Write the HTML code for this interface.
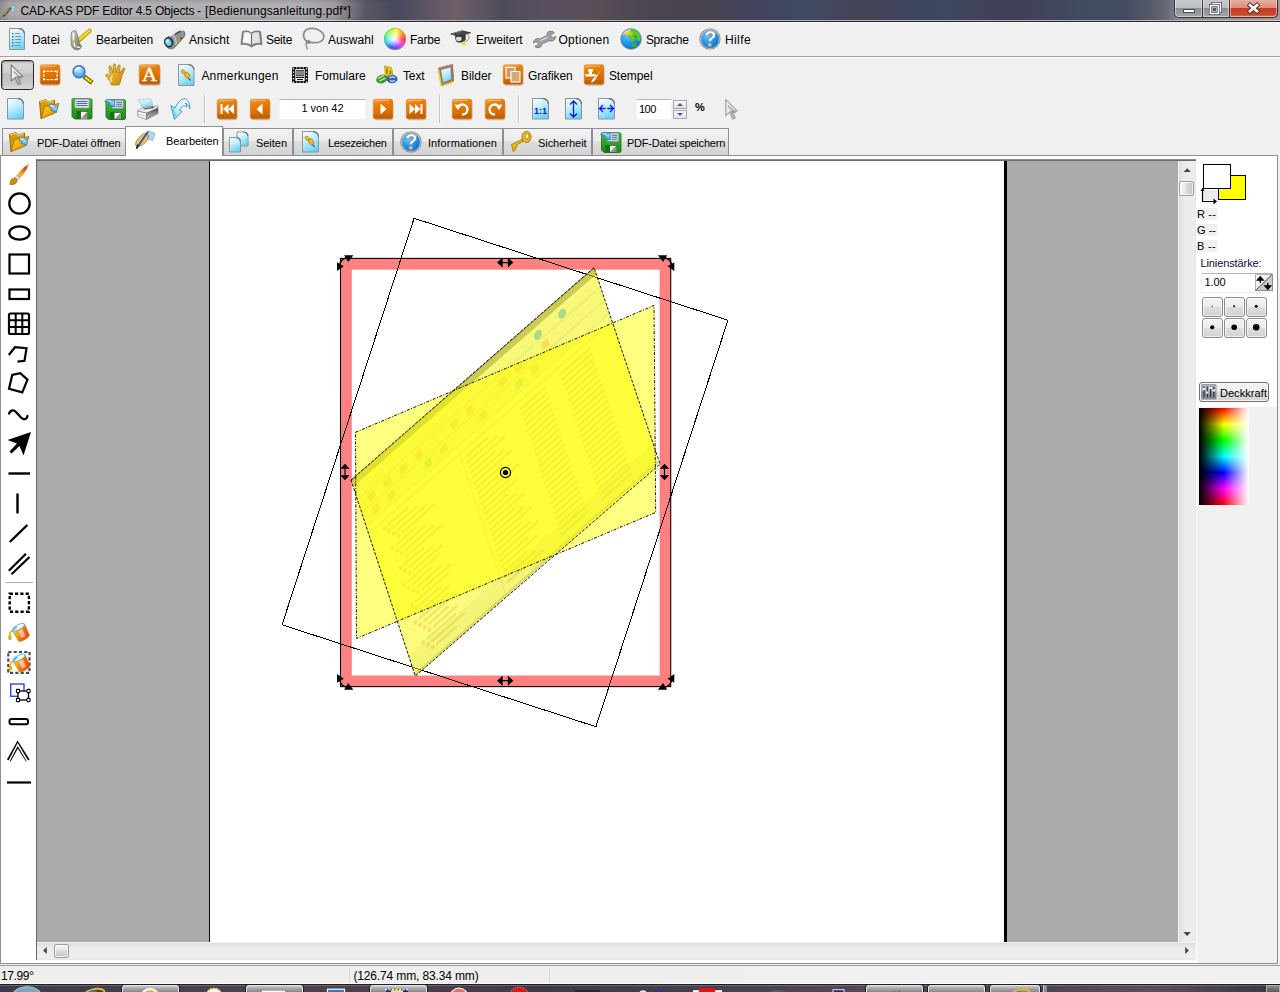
<!DOCTYPE html>
<html lang="de"><head><meta charset="utf-8"><title>CAD-KAS PDF Editor 4.5 Objects - [Bedienungsanleitung.pdf*]</title>
<style>
html,body{margin:0;padding:0;}
body{width:1280px;height:992px;overflow:hidden;background:#f0f0f0;position:relative;font-family:"Liberation Sans", sans-serif;font-size:12px;}
#app{position:absolute;left:0;top:0;width:1280px;height:992px;overflow:hidden;}
#app div{position:absolute;box-sizing:border-box;}
#app svg{position:absolute;left:0;top:0;}
.t{white-space:nowrap;}
</style></head><body><div id="app">
<div style="left:0px;top:0px;width:1280px;height:21px;background:linear-gradient(to right,#4c4858 0,#4b4a5c 380px,#4a4a5e 400px,#5c5463 425px,#6e5f69 455px,#5c5462 482px,#4c4a5c 503px,#595061 540px,#5a4e58 590px,#4c4650 640px,#49424c 700px,#43435a 740px,#404560 770px,#414a63 810px,#444455 860px,#3e455e 910px,#3f4660 950px,#3f4053 1010px,#414b62 1085px,#454c61 1125px,#545a69 1150px,#696d79 1168px,#868890 1178px,#9a9a9e 1280px);"></div>
<div style="left:0px;top:0px;width:400px;height:20px;background:linear-gradient(to right,rgba(150,147,150,.9) 0,rgba(172,169,172,1) 10px,rgba(178,175,179,1) 40px,rgba(178,175,179,1) 300px,rgba(168,164,170,.9) 335px,rgba(150,146,154,.62) 350px,rgba(120,116,126,.3) 366px,rgba(100,96,108,0) 392px);"></div>
<div style="left:0px;top:0px;width:400px;height:20px;background:linear-gradient(to bottom,rgba(60,56,64,.16) 0,rgba(60,56,64,0) 4px,rgba(60,56,64,0) 15px,rgba(60,56,64,.14) 20px);"></div>
<div style="left:0px;top:20px;width:1280px;height:1px;background:linear-gradient(to right,#d4d4d8 0,#cfcfd4 330px,#b2b0ba 380px,#b0aeb8 1100px,#d0d0d4 1280px);"></div>
<div style="left:0px;top:21px;width:1280px;height:1px;background:#28282c;"></div>
<div style="left:0px;top:22px;width:1280px;height:1px;background:#fcfcfc;"></div>
<div style="left:0px;top:56px;width:1280px;height:1px;background:#a0a0a0;"></div>
<div style="left:0px;top:57px;width:1280px;height:1px;background:#fff;"></div>
<div style="left:0px;top:155px;width:1278px;height:809px;background:#fff;border:1px solid #8e8f94;border-bottom-color:#8e8f94;"></div>
<div style="left:36px;top:159px;width:1142px;height:783px;background:#ababab;border-left:1px solid #696969;border-top:2px solid #6c6c6c;"></div>
<div style="left:37px;top:159px;width:1159px;height:1px;background:#8e8e8e;"></div>
<div style="left:210px;top:161px;width:794px;height:781px;background:#fff;"></div>
<div style="left:209px;top:161px;width:1px;height:781px;background:#0a0a0a;"></div>
<div style="left:1004px;top:161px;width:3px;height:781px;background:#000;"></div>
<div style="left:37px;top:942px;width:1159px;height:18px;background:linear-gradient(to bottom,#f6f6f6 0,#f6f6f6 1px,#dedede 1.500px,#e6e6e6 4px,#ececec 7px,#ededed 16px,#e4e4e4 18px);"></div>
<div style="left:36px;top:942px;width:1px;height:18px;background:#696969;"></div>
<div style="left:54px;top:943.5px;width:15px;height:14.5px;background:linear-gradient(to bottom,#f6f6f6 0,#e8e8e8 40%,#d4d4d4 60%,#c8c8c8 100%);border:1px solid #9c9c9c;border-radius:2px;box-shadow:inset 0 0 0 1px rgba(255,255,255,.7);"></div>
<div style="left:1178px;top:161px;width:18px;height:781px;background:linear-gradient(to right,#f6f6f6 0,#f6f6f6 1px,#dedede 1.500px,#e6e6e6 4px,#ececec 7px,#ededed 16px,#e4e4e4 18px);"></div>
<div style="left:1179.2px;top:181px;width:14.5px;height:14.8px;background:linear-gradient(to right,#f6f6f6 0,#e8e8e8 40%,#d4d4d4 60%,#c8c8c8 100%);border:1px solid #9c9c9c;border-radius:2px;box-shadow:inset 0 0 0 1px rgba(255,255,255,.7);"></div>
<div style="left:1178px;top:159px;width:18px;height:1px;background:#8e8e8e;"></div>
<div style="left:1178px;top:160px;width:18px;height:1px;background:#6c6c6c;"></div>
<div style="left:0px;top:965px;width:1280px;height:1px;background:#9a9ca0;"></div>
<div style="left:0px;top:966px;width:1280px;height:17px;background:#f0eded;"></div>
<div style="left:640px;top:966px;width:640px;height:17px;background:linear-gradient(to right,#f0eded,#f0f0f0 120px);"></div>
<div style="left:349px;top:967px;width:1px;height:16px;background:#dcd8d8;"></div>
<div style="left:549px;top:967px;width:1px;height:16px;background:#dcd8d8;"></div>
<div style="left:0px;top:983px;width:1280px;height:1px;background:#fdfdfd;"></div>
<div style="left:0px;top:984px;width:1280px;height:8px;background:linear-gradient(to right,#3c3a4a 0,#4a4052 15%,#4e3f4c 30%,#3d3a48 42%,#45404c 55%,#55475a 68%,#4a4152 80%,#5a4e5c 90%,#3a3640 100%);"></div>
<div style="left:0px;top:984px;width:1280px;height:1px;background:#1c1c20;"></div>
<div style="left:0px;top:985px;width:1280px;height:1px;background:rgba(255,255,255,.22);"></div>
<div style="left:122px;top:985px;width:57px;height:8px;background:linear-gradient(to bottom,#c9c9cb 0,#a4a4a8 40%,#7e7e84 100%);border:1px solid #e4e4e6;border-bottom:none;border-radius:3px 3px 0 0;box-shadow:0 0 0 1px #1c1c20;"></div>
<div style="left:246px;top:985px;width:57px;height:8px;background:linear-gradient(to bottom,#c9c9cb 0,#a4a4a8 40%,#7e7e84 100%);border:1px solid #e4e4e6;border-bottom:none;border-radius:3px 3px 0 0;box-shadow:0 0 0 1px #1c1c20;"></div>
<div style="left:370px;top:985px;width:57px;height:8px;background:linear-gradient(to bottom,#c9c9cb 0,#a4a4a8 40%,#7e7e84 100%);border:1px solid #e4e4e6;border-bottom:none;border-radius:3px 3px 0 0;box-shadow:0 0 0 1px #1c1c20;"></div>
<div style="left:866px;top:985px;width:57px;height:8px;background:linear-gradient(to bottom,#c9c9cb 0,#a4a4a8 40%,#7e7e84 100%);border:1px solid #e4e4e6;border-bottom:none;border-radius:3px 3px 0 0;box-shadow:0 0 0 1px #1c1c20;"></div>
<div style="left:928px;top:985px;width:57px;height:8px;background:linear-gradient(to bottom,#c9c9cb 0,#a4a4a8 40%,#7e7e84 100%);border:1px solid #e4e4e6;border-bottom:none;border-radius:3px 3px 0 0;box-shadow:0 0 0 1px #1c1c20;"></div>
<div style="left:990px;top:985px;width:50px;height:8px;background:linear-gradient(to bottom,#c9c9cb 0,#a4a4a8 40%,#7e7e84 100%);border:1px solid #e4e4e6;border-bottom:none;border-radius:3px 3px 0 0;box-shadow:0 0 0 1px #1c1c20;"></div>
<div style="left:1266px;top:985px;width:14px;height:7px;background:linear-gradient(to bottom,#8a8a8e,#5a5a60);border:1px solid #b0b0b4;border-bottom:none;"></div>
<div style="left:1043px;top:985px;width:4px;height:7px;background:#8e8e94;border-left:1px solid #c8c8cc;"></div>
<div style="left:384px;top:28px;width:22px;height:22px;border-radius:50%;background:conic-gradient(from 90deg,#ff4040,#ff40e0,#8040ff,#3060ff,#30d0ff,#40ff80,#a0ff30,#ffff30,#ffa030,#ff4040);"></div>
<div style="left:1px;top:60px;width:33px;height:30px;border:1.500px solid #262626;border-radius:3.500px;background:linear-gradient(to bottom,#bdbdbd 0,#d6d6d6 12%,#cdcdcd 42%,#bfbfbf 47%,#c6c6c6 75%,#d6d6d6 100%);box-shadow:inset 1px 1px 1px rgba(0,0,0,.25);"></div>
<div style="left:278.5px;top:98.5px;width:87px;height:21.5px;background:#fff;border:1px solid #f0f2f5;border-top-color:#b4b6bc;"></div>
<div style="left:635.5px;top:98.5px;width:36px;height:21.5px;background:#fff;border:1px solid #f0f2f5;border-top-color:#b4b6bc;"></div>
<div style="left:673px;top:100px;width:14px;height:9px;background:linear-gradient(#f6f6f6,#e4e4e4);border:1px solid #a8a8a8;"></div>
<div style="left:673px;top:110px;width:14px;height:9px;background:linear-gradient(#f6f6f6,#e4e4e4);border:1px solid #a8a8a8;"></div>
<div style="left:2px;top:128px;width:125px;height:28px;background:linear-gradient(to bottom,#f2f2f2 0,#ebebeb 45%,#dddddd 50%,#d3d3d3 100%);border:1px solid #8c8e96;"></div>
<div style="left:223px;top:128px;width:70px;height:28px;background:linear-gradient(to bottom,#f2f2f2 0,#ebebeb 45%,#dddddd 50%,#d3d3d3 100%);border:1px solid #8c8e96;"></div>
<div style="left:293px;top:128px;width:100px;height:28px;background:linear-gradient(to bottom,#f2f2f2 0,#ebebeb 45%,#dddddd 50%,#d3d3d3 100%);border:1px solid #8c8e96;"></div>
<div style="left:393px;top:128px;width:110px;height:28px;background:linear-gradient(to bottom,#f2f2f2 0,#ebebeb 45%,#dddddd 50%,#d3d3d3 100%);border:1px solid #8c8e96;"></div>
<div style="left:503px;top:128px;width:89px;height:28px;background:linear-gradient(to bottom,#f2f2f2 0,#ebebeb 45%,#dddddd 50%,#d3d3d3 100%);border:1px solid #8c8e96;"></div>
<div style="left:592px;top:128px;width:137px;height:28px;background:linear-gradient(to bottom,#f2f2f2 0,#ebebeb 45%,#dddddd 50%,#d3d3d3 100%);border:1px solid #8c8e96;"></div>
<div style="left:125px;top:126px;width:98px;height:30px;background:#fff;border:1px solid #8c8e96;border-bottom:none;"></div>
<div style="left:1197px;top:407px;width:80px;height:556px;background:#f0f0f0;"></div>
<div style="left:1218px;top:175px;width:28px;height:25px;background:#ffff00;border:1.500px solid #000;"></div>
<div style="left:1203px;top:164px;width:28px;height:25px;background:#fff;border:1.500px solid #000;"></div>
<div style="left:1203px;top:190px;width:15px;height:10px;background:#ebebeb;"></div>
<div style="left:1197px;top:208px;width:20px;height:12px;background:#f0f0f0;"></div>
<div style="left:1197px;top:224px;width:20px;height:12px;background:#f0f0f0;"></div>
<div style="left:1197px;top:240px;width:20px;height:12px;background:#f0f0f0;"></div>
<div style="left:1201px;top:272.5px;width:72px;height:20px;background:#fff;border:1px solid #eceef2;border-top-color:#b4b6bc;"></div>
<div style="left:1255px;top:274px;width:17.5px;height:17px;background:linear-gradient(135deg,#fdfdfd 0,#efefef 49%,#c4c4c4 51%,#d8d8d8 100%);border:1px solid #8a8a8a;border-top-color:#b0b0b0;border-left-color:#b0b0b0;"></div>
<div style="left:1202px;top:297px;width:20.5px;height:19.5px;background:linear-gradient(to bottom,#f3f3f3 0,#ececec 48%,#dedede 52%,#d2d2d2 100%);border:1px solid #8c8c8c;border-radius:3px;box-shadow:inset 0 0 0 1px rgba(255,255,255,.6);"></div>
<div style="left:1224px;top:297px;width:20.5px;height:19.5px;background:linear-gradient(to bottom,#f3f3f3 0,#ececec 48%,#dedede 52%,#d2d2d2 100%);border:1px solid #8c8c8c;border-radius:3px;box-shadow:inset 0 0 0 1px rgba(255,255,255,.6);"></div>
<div style="left:1246px;top:297px;width:20.5px;height:19.5px;background:linear-gradient(to bottom,#f3f3f3 0,#ececec 48%,#dedede 52%,#d2d2d2 100%);border:1px solid #8c8c8c;border-radius:3px;box-shadow:inset 0 0 0 1px rgba(255,255,255,.6);"></div>
<div style="left:1202px;top:318px;width:20.5px;height:19.5px;background:linear-gradient(to bottom,#f3f3f3 0,#ececec 48%,#dedede 52%,#d2d2d2 100%);border:1px solid #8c8c8c;border-radius:3px;box-shadow:inset 0 0 0 1px rgba(255,255,255,.6);"></div>
<div style="left:1224px;top:318px;width:20.5px;height:19.5px;background:linear-gradient(to bottom,#f3f3f3 0,#ececec 48%,#dedede 52%,#d2d2d2 100%);border:1px solid #8c8c8c;border-radius:3px;box-shadow:inset 0 0 0 1px rgba(255,255,255,.6);"></div>
<div style="left:1246px;top:318px;width:20.5px;height:19.5px;background:linear-gradient(to bottom,#f3f3f3 0,#ececec 48%,#dedede 52%,#d2d2d2 100%);border:1px solid #8c8c8c;border-radius:3px;box-shadow:inset 0 0 0 1px rgba(255,255,255,.6);"></div>
<div style="left:1198.5px;top:382px;width:70.5px;height:19.5px;background:linear-gradient(to bottom,#f3f3f3 0,#ececec 48%,#dedede 52%,#d2d2d2 100%);border:1px solid #707070;border-radius:3px;box-shadow:inset 0 0 0 1px rgba(255,255,255,.7);"></div>
<div style="left:1199px;top:408px;width:50px;height:96.5px;background:linear-gradient(to right,#000 0,rgba(0,0,0,0) 50%,rgba(255,255,255,0) 50%,#fff 100%),linear-gradient(to bottom,#f00 0,#ff0 16.600%,#0f0 33.300%,#0ff 50%,#00f 66.600%,#f0f 83.300%,#f00 100%);"></div>
<svg width="1280" height="992" viewBox="0 0 1280 992">
<g transform="translate(2,4)">
<path d="M10.2 1.2l3.4 1.3-1.6 6-3.6-1.6z" fill="#9fd3f2" stroke="#5fa3cc" stroke-width=".6"/>
<path d="M1 11.5c1.2-3.6 4.2-6.8 7.3-8.2l1.4 1.6C7.6 7.6 4.6 10.6 1.6 12.4z" fill="#e2a43a" stroke="#8a6420" stroke-width=".7"/>
<path d="M2.2 12.2L8.6 3.8" stroke="#2a4f8a" stroke-width="1.1"/>
<path d="M.6 13l1.2-2.2 1 1.3z" fill="#333"/>
</g>
<defs>
<linearGradient id="wbg" x1="0" y1="0" x2="0" y2="1"><stop offset="0" stop-color="#c9cacd"/><stop offset=".48" stop-color="#bdbec2"/><stop offset=".5" stop-color="#8b8d94"/><stop offset="1" stop-color="#a4a7ae"/></linearGradient>
<linearGradient id="wbr" x1="0" y1="0" x2="0" y2="1"><stop offset="0" stop-color="#eab3a8"/><stop offset=".48" stop-color="#dd8a7a"/><stop offset=".5" stop-color="#c43c22"/><stop offset=".85" stop-color="#cc4a2c"/><stop offset="1" stop-color="#e08a62"/></linearGradient>
</defs>
<path d="M1174.5 -1V13.5a4 4 0 0 0 4 4H1273.500a4 4 0 0 0 4-4V-1z" fill="url(#wbg)" stroke="#35353b" stroke-width="1"/>
<path d="M1229.5 -1V17.5H1273.5a4 4 0 0 0 4-4V-1z" fill="url(#wbr)" stroke="#4a2620" stroke-width="1"/>
<path d="M1202.500 0V17" stroke="#35353b" stroke-width="1"/>
<path d="M1175.5 0V13.500a3 3 0 0 0 3 3H1201.5V0M1203.500 0V16.500H1228.500V0M1230.5 0V16.5H1273.500a3 3 0 0 0 3-3V0" fill="none" stroke="rgba(255,255,255,.45)" stroke-width="1"/>
<rect x="1183.500" y="9.5" width="11" height="3" fill="#fff" stroke="#4a4c55" stroke-width="1"/>
<path d="M1212.500 3.5h8v8h-8z" fill="none" stroke="#4a4c55" stroke-width="3"/><path d="M1212.500 3.5h8v8h-8z" fill="none" stroke="#fff" stroke-width="1.400"/>
<path d="M1210.500 5.5h8v8h-8z" fill="#b4b5ba" stroke="#4a4c55" stroke-width="3"/><path d="M1210.500 5.5h8v8h-8z" fill="none" stroke="#fff" stroke-width="1.600"/><rect x="1213" y="8" width="3" height="3" fill="#55575f"/>
<path d="M1250 5.200l7 6M1257 5.200l-7 6" stroke="#4a3434" stroke-width="4.600" stroke-linecap="square"/>
<path d="M1250 5.200l7 6M1257 5.200l-7 6" stroke="#fff" stroke-width="2.700" stroke-linecap="square"/>

<path d="M1183.500 172l3.700-3.800 3.700 3.800z" fill="#454545"/><path d="M1183.300 932l3.800 4 3.800-4z" fill="#454545"/>
<path d="M46.800 947l-3.700 3.500 3.700 3.500z" fill="#454545"/><path d="M1185.200 947l3.700 3.500-3.700 3.500z" fill="#454545"/>
<g transform="translate(0 1.200)">
<ellipse cx="27" cy="996" rx="15.500" ry="10.500" fill="#7fa4bc" stroke="#b8d0dc" stroke-width="1"/>
<ellipse cx="94" cy="993.500" rx="11" ry="5.500" fill="none" stroke="#e8b820" stroke-width="2" transform="rotate(-14 94 993.500)"/><circle cx="93" cy="996" r="7" fill="#3a7ad0"/>
<circle cx="150" cy="996" r="9.500" fill="#f4f4f4"/><circle cx="150" cy="996.500" r="7.500" fill="#f0b010"/>
<circle cx="214" cy="995.500" r="8.500" fill="#f6f6e8" stroke="#e0d020" stroke-width="1.500" stroke-dasharray="1.500 1.500"/>
<rect x="262" y="989.500" width="23" height="4" fill="#fff"/>
<rect x="327.500" y="988" width="17" height="5" fill="#3a78b0" stroke="#fff" stroke-width="1.200"/>
<rect x="386" y="988" width="22" height="4" fill="#28288a"/><rect x="391" y="989" width="12" height="3" fill="#f4f040"/><path d="M385 988.500h24" stroke="#fff" stroke-width="1.200" stroke-dasharray="2 1.500"/>
<circle cx="459" cy="996" r="9" fill="#f06a6a" stroke="#fff" stroke-width="1.200"/>
<circle cx="519" cy="996.500" r="10.500" fill="#e01818" stroke="#f08080" stroke-width="1" stroke-dasharray="1.500 1"/>
<rect x="575" y="989" width="25" height="4" fill="#26262c"/>
<path d="M655 989.500h3v2h-3zM659.500 989.500h3.500v2h-3.500z" fill="#2020e0"/><circle cx="643" cy="993" r="4" fill="#e8e8e8"/>
<rect x="693" y="989" width="29" height="4" fill="#fff"/><rect x="699" y="987" width="16" height="5" fill="#f01010"/>
<ellipse cx="778" cy="992" rx="8" ry="3" fill="#4a7a8a" opacity=".6"/>
<rect x="833" y="988.500" width="11" height="4" fill="#26267a" stroke="#e8e8f0" stroke-width="1"/>
<path d="M894 990l2 2M900 989.500l-1.500 2.500" stroke="#5a6a7a" stroke-width="1.500"/>
<ellipse cx="1020" cy="993.500" rx="10" ry="5" fill="none" stroke="#e8b820" stroke-width="2" transform="rotate(-14 1020 993.500)"/><circle cx="1019" cy="996" r="6" fill="#3a7ad0"/>
</g>
<defs>
<linearGradient id="gOr" x1="0" y1="0" x2="0.25" y2="1"><stop offset="0" stop-color="#f8ac50"/><stop offset=".25" stop-color="#ea8208"/><stop offset=".7" stop-color="#dc7000"/><stop offset="1" stop-color="#c86400"/></linearGradient>
<linearGradient id="gDoc" x1="0.2" y1="0" x2="0.6" y2="1"><stop offset="0" stop-color="#f6fdff"/><stop offset=".4" stop-color="#c8f0fc"/><stop offset="1" stop-color="#68d2f8"/></linearGradient>
<linearGradient id="gGold" x1="0" y1="0" x2="1" y2="1"><stop offset="0" stop-color="#ffdc20"/><stop offset=".5" stop-color="#f6b008"/><stop offset="1" stop-color="#c88008"/></linearGradient>
<linearGradient id="gGreen" x1="0" y1="0" x2="0" y2="1"><stop offset="0" stop-color="#4cc63a"/><stop offset=".5" stop-color="#2ea424"/><stop offset="1" stop-color="#1f8a1a"/></linearGradient>
<linearGradient id="gBlueArr" x1="0" y1="0" x2="0" y2="1"><stop offset="0" stop-color="#e8f6ff"/><stop offset=".5" stop-color="#8ccdf0"/><stop offset="1" stop-color="#3f9fd8"/></linearGradient>
<linearGradient id="gSteel" x1="0" y1="0" x2="1" y2="1"><stop offset="0" stop-color="#e8e8e8"/><stop offset=".5" stop-color="#9a9a9a"/><stop offset="1" stop-color="#6a6a6a"/></linearGradient>
<radialGradient id="gBall" cx=".35" cy=".3" r=".8"><stop offset="0" stop-color="#6fc8ff"/><stop offset=".5" stop-color="#1e9af0"/><stop offset="1" stop-color="#0a6cc8"/></radialGradient>
<radialGradient id="gLens" cx=".4" cy=".2" r=".9"><stop offset="0" stop-color="#f0faff"/><stop offset=".55" stop-color="#6cbcf6"/><stop offset="1" stop-color="#2a94ee"/></radialGradient>
<linearGradient id="gHand" x1="0" y1="0" x2="1" y2="1"><stop offset="0" stop-color="#f6d050"/><stop offset=".45" stop-color="#eaae28"/><stop offset="1" stop-color="#c07c0c"/></linearGradient>
<linearGradient id="gPr" x1="0" y1="0" x2="0" y2="1"><stop offset="0" stop-color="#3a3a3a"/><stop offset=".45" stop-color="#8a8a8a"/><stop offset="1" stop-color="#b8b8b8"/></linearGradient>
<linearGradient id="gUndo" x1="1" y1="0" x2="0" y2="1"><stop offset="0" stop-color="#ffffff"/><stop offset=".5" stop-color="#d4f2fd"/><stop offset="1" stop-color="#7ad4f8"/></linearGradient>
<filter id="fS" x="-20%" y="-20%" width="140%" height="150%"><feGaussianBlur stdDeviation=".7"/></filter>
<filter id="fB" x="-20%" y="-20%" width="140%" height="140%"><feGaussianBlur stdDeviation=".35"/></filter>
</defs>
<g transform="translate(9,28)" ><path d="M.5 .5H10Q15.5 1 15.5 6V21.5H.5z" fill="url(#gDoc)" stroke="#8a949c" stroke-width="1"/><path d="M10 .6Q15.2 1 15.4 6" fill="none" stroke="#6a7278" stroke-width="1.100"/><g stroke="#7a93a8" stroke-width="1"><path d="M6 5.500h5M6 8.500h6M6 11.500h6M6 14.500h6M6 17.500h5"/></g>
<g fill="#3f6f9f"><rect x="3" y="5" width="1.500" height="1.500"/><rect x="3" y="8" width="1.500" height="1.500"/><rect x="3" y="11" width="1.500" height="1.500"/><rect x="3" y="14" width="1.500" height="1.500"/><rect x="3" y="17" width="1.500" height="1.500"/></g></g>
<g transform="translate(70,27)" ><path d="M7.500 12L18.800 2.200c1.600-.9 3.200.9 2.300 2.500L10 15z" fill="#e4c000" stroke="#a88400" stroke-width=".8"/>
<path d="M9 12.500L19.800 3.200" stroke="#f8f040" stroke-width="1.300" opacity=".85"/>
<path d="M1.500 5.500C2.500 3.500 4.500 3.300 6 4c.8 2.500 1.600 5 2.200 8 .6 3 1.800 5.500 3.300 7.500C11 21.500 9 22.800 6.500 22.800 4 22.500 2.200 21 1.800 19c-.8-4.500-1.200-9-.3-13.500z" fill="url(#gSteel)" stroke="#707070" stroke-width=".8"/>
<path d="M3.500 6c-.5 4.500 0 9.500 1.500 14" stroke="#fdfdfd" stroke-width="1.600" fill="none" opacity=".9"/>
<path d="M6.500 19.500c1.200 1 2.600 1.200 3.800.6" stroke="#f4f4f4" stroke-width="1.200" fill="none"/>
<ellipse cx="3.800" cy="14.500" rx="1" ry="2" fill="#d8c000"/></g>
<g transform="translate(163,28)" ><path d="M3.500 10.500L13.500 2c2.500-1.500 6-.5 7.800 1.800 1 2 .6 4-.6 5.600L11.500 19.500c-2.500 2-6 1.500-8-1-1.600-2.500-1.600-5.800 0-8z" fill="#8e9196" stroke="#55585e" stroke-width=".8"/>
<path d="M6.500 8L14.500 2.200c1.800-.8 3.800-.4 5 .6" stroke="#f2f2f2" stroke-width="2" fill="none"/>
<path d="M12 6.500l6-3.500" stroke="#3c3c3c" stroke-width="1.100"/>
<path d="M9.500 7c2.500 2 4 5.500 3.500 9.500" stroke="#c8cacc" stroke-width="1.300" fill="none"/>
<path d="M14.500 14l3.500-3.500" stroke="#d09020" stroke-width="2.200"/><path d="M17.500 11l1.500-1.500" stroke="#3a50a0" stroke-width="2"/>
<ellipse cx="5.600" cy="14.300" rx="4.600" ry="5.400" transform="rotate(-20 5.600 14.300)" fill="#2e3238"/><ellipse cx="5.300" cy="14.300" rx="3" ry="3.800" transform="rotate(-20 5.300 14.300)" fill="#6cd0f8"/><ellipse cx="4.600" cy="13.300" rx="1.300" ry="1.700" fill="#d8f6ff" opacity=".9"/></g>
<g transform="translate(240,30)" ><path d="M1 14.500L2.500 1.500c3-1 6.500-.6 9 1.500 2.500-2.100 6-2.500 9-1.500L22 14.500c-3.500-.8-7-.3-10.500 2.500C8 14.200 4.500 13.700 1 14.500z" fill="#7d8a80" stroke="#4e5a52" stroke-width=".7"/>
<path d="M2.500 13L3.800 2.300c2.600-.6 5.400-.2 7.500 1.500V15C8.800 13.200 5.600 12.600 2.500 13z" fill="#f8f8f8" stroke="#9a9a9a" stroke-width=".5"/>
<path d="M20.500 13L19.200 2.300c-2.600-.6-5.400-.2-7.500 1.500V15c2.500-1.800 5.700-2.400 8.800-2z" fill="#e4e4e4" stroke="#8a8a8a" stroke-width=".5"/>
<path d="M11.500 3.800V15" stroke="#6a6a6a" stroke-width=".9"/></g>
<g transform="translate(302,27)" ><path d="M5 14.500C1.500 12.500 .5 8 2.500 4.500 5 1 10.500.5 15.500 2.500c4.500 1.800 7.500 5.500 6 9-1.500 3.500-7 4.500-12 4-1.800-.2-3.200-.5-4.500-1z" fill="none" stroke="#8a8a8a" stroke-width="1.700"/>
<path d="M7.500 14.500c-2.500.2-3.800 1.400-3.500 3 .3 1.800 1 2.800 1.200 4.500" fill="none" stroke="#9a9a9a" stroke-width="1.500" stroke-linecap="round"/>
<circle cx="6.500" cy="15" r="1.600" fill="none" stroke="#7a7a7a" stroke-width="1"/></g>
<defs><clipPath id="cw"><circle cx="395" cy="39" r="10.500"/></clipPath>
<radialGradient id="cwW" cx=".5" cy=".5" r=".5"><stop offset="0" stop-color="#fff"/><stop offset=".35" stop-color="#fff" stop-opacity=".75"/><stop offset="1" stop-color="#fff" stop-opacity="0"/></radialGradient></defs>

<circle cx="394" cy="38.500" r="9" fill="url(#cwW)"/><circle cx="395" cy="39" r="10.700" fill="none" stroke="#9a8f8a" stroke-width=".8" opacity=".8"/>
<g transform="translate(450,30)" ><path d="M5.500 5.500c0 2.500.2 4.500 1.200 6 2.500 1.300 6 .8 8.300-1.300.6-1.600.4-3.600.2-5.200z" fill="#3e3e3e" stroke="#262626" stroke-width=".6"/>
<ellipse cx="8.800" cy="8.800" rx="2.800" ry="2.300" fill="#e8e8e8" opacity=".92"/>
<path d="M.8 4L12 .8 20.500 2.800 9 6.200z" fill="#4a4a4a" stroke="#1e1e1e" stroke-width=".7"/>
<path d="M2 3.900L12 1.300" stroke="#8a8a8a" stroke-width=".7"/>
<path d="M17 3.800c2.600 1.800 2.800 4.600 0 7-1.400 1-2.800 1.600-3.600 2.600" fill="none" stroke="#b89a20" stroke-width="1"/>
<path d="M12.200 12.200l1.300 2.300 2.500.3" fill="none" stroke="#e8dc10" stroke-width="1.600"/></g>
<g transform="translate(533,30.5)" ><path d="M15.500 1.200c2-.8 4.500-.3 5.800 1l-3.600 2 .3 2.300 2.400.7 2.200-1.500c.2 2-.8 3.800-2.800 4.600-1.300.5-2.600.3-3.600-.1L8.800 13.500c.2 1.300-.5 2.700-1.800 3.300-1.800.8-4 .4-5.200-.9l3.500-1.600-.2-2.300-2.500-.8-2 1.400c-.2-1.800.8-3.600 2.800-4.400 1.200-.4 2.400-.2 3.400.2l7.200-3.400c-.2-1.500.2-3 1.500-3.800z" fill="#a2a2a2" stroke="#6e6e6e" stroke-width=".8"/>
<path d="M7.500 10l7-3.300" stroke="#e0e0e0" stroke-width="1.200"/></g>
<g transform="translate(620,28)" ><circle cx="11" cy="11" r="10.700" fill="#8a8f88"/><circle cx="11" cy="11" r="9.900" fill="url(#gBall)"/>
<path d="M5 4.500C7 2.300 10 1.300 13 1.600c3 .5 5.500 2.300 6.800 5 .8 2.200.8 4.200.2 6.200-1.500.3-2.800-.2-3.500-1.500-1-.2-2 .3-2.500 1.300-.8 1.200-2.200 1.200-3.200.4-1-1-1-2.400-.2-3.500C9 8.300 7.200 8.600 6 7.800 5.200 7 4.800 5.800 5 4.500z" fill="#5cc81e"/>
<path d="M4.500 5.200C5.800 3.500 7.500 2.400 9.500 2l.8 3.200C9.500 6.800 8 7.800 6.200 7.600z" fill="#f0c83a"/>
<path d="M10 3l3 1.500-1 3.500-2.500-.5z" fill="#a8e030" opacity=".8"/>
<path d="M12.500 15c1.500-.6 3-.2 3.800 1 .3 1.300-.2 2.500-1.300 3.200-1.200.5-2.300 0-2.800-1.200-.4-1-.3-2.100.3-3z" fill="#48b020"/>
<path d="M14 8c1.500 0 2.500 1 2.500 2.500" stroke="#2a7ad0" stroke-width="1.500" fill="none"/>
<path d="M3.200 7C4.500 4 7.500 2 11 1.800" fill="none" stroke="#fff" stroke-width="1.300" opacity=".6"/></g>
<g transform="translate(699,28)" ><circle cx="11" cy="11" r="10.600" fill="#7f858c"/><circle cx="11" cy="11" r="9.900" fill="#b8bec6"/><circle cx="11" cy="11.300" r="8.800" fill="url(#gBall)"/>
<path d="M5.800 7.400C6.200 4.300 8.400 2.800 11.300 2.800c3.200 0 5.300 1.700 5.300 4.200 0 2.100-1.300 3.100-2.700 4-1.100.7-1.500 1.200-1.500 2.400H9.500c0-2.100.8-3.100 2.200-4 1.100-.7 1.800-1.200 1.800-2.200s-.9-1.700-2.200-1.700c-1.400 0-2.300.8-2.500 2.200z" fill="#fff" stroke="#858b93" stroke-width=".8"/>
<circle cx="10.800" cy="16.800" r="2" fill="#c4c4c4" stroke="#858b93" stroke-width=".8"/></g>
<g transform="translate(10.5,64)" ><path d="M.7 .8V17.200L4.600 13.600 7.600 20.600 10.300 19.400 7.300 12.600H12.300z" fill="#e9e9e9" stroke="#7d7d7d" stroke-width="1.100" stroke-linejoin="round"/><path d="M3.200 7.500L9.800 13.800 6 13.200 8.800 19.500" fill="none" stroke="#8f8f8f" stroke-width="1.500" opacity=".75"/></g>
<g transform="translate(40,64.5)" ><rect x="1" y="1.800" width="19.5" height="19.5" rx="3" fill="#b9916a" opacity=".55" filter="url(#fS)"/><rect x=".3" y=".3" width="19.4" height="19.4" rx="1.800" fill="url(#gOr)" stroke="#d87a18" stroke-width=".6"/><rect x=".6" y="15.5" width="18.8" height="4" rx="1.500" fill="#b85a00" opacity=".45"/><path d="M2 1.600h14" stroke="#fbd0a0" stroke-width="1" opacity=".55"/><path d="M3.200 6.800H17.600M3.200 15.200H17.600" stroke="#fff" stroke-width="1.300" stroke-dasharray="2.400 1.200" fill="none"/><path d="M3.800 6.200V15.800M17 6.200V15.800" stroke="#fff" stroke-width="1.300" stroke-dasharray="2.400 1.200" fill="none"/></g>
<g transform="translate(72,64)" ><path d="M12 12.500l8.200 6.300" stroke="#5a4e18" stroke-width="4.400" stroke-linecap="butt"/><path d="M13 13.300l6.600 5" stroke="#f4d800" stroke-width="2.600" stroke-linecap="butt"/>
<circle cx="7" cy="7.800" r="6" fill="url(#gLens)" stroke="#3a74ac" stroke-width="1.400"/><path d="M3.500 6.500c.8-2 2.600-3 4.500-2.800" stroke="#fff" stroke-width="1.200" fill="none" opacity=".9"/></g>
<g transform="translate(105,63.5)" ><path d="M6.500 21.500C5.500 18 3.500 15.500 1 12.500c-.8-1.200.6-2.400 1.800-1.400L5.500 13.500 4 3.500c-.2-1.500 1.600-1.800 2-.4L8 9.500 8.500 1.500c.1-1.500 2-1.500 2.100 0L11 9.500l2.200-7.200c.4-1.400 2.200-.9 2 .5L14 10.500l4-5.500c.9-1.200 2.400-.2 1.700 1L16.500 13c-.5 3.500-1 6-2.500 8.500z" fill="url(#gHand)" stroke="#b07a10" stroke-width=".8" stroke-linejoin="round"/>
<path d="M6 18.500c-.6-2.500-.3-4.500 1-6.500" fill="none" stroke="#fff4c0" stroke-width="1.800" opacity=".8"/></g>
<g transform="translate(139,64.5)" ><rect x="1" y="1.800" width="20.5" height="19.5" rx="3" fill="#b9916a" opacity=".55" filter="url(#fS)"/><rect x=".3" y=".3" width="20.4" height="19.4" rx="1.800" fill="url(#gOr)" stroke="#d87a18" stroke-width=".6"/><rect x=".6" y="15.5" width="19.8" height="4" rx="1.500" fill="#b85a00" opacity=".45"/><path d="M2 1.600h15" stroke="#fbd0a0" stroke-width="1" opacity=".55"/><text x="9.300" y="16.600" text-anchor="middle" font-family="Liberation Serif,serif" font-size="18.500" fill="#fff" stroke="#fff" stroke-width=".35" transform="scale(1.130 1)">A</text></g>
<g transform="translate(178,64)" ><path d="M.5 .5H10.5Q16.0 1 16.0 6V21.5H.5z" fill="url(#gDoc)" stroke="#8a949c" stroke-width="1"/><path d="M10.5 .6Q15.7 1 15.9 6" fill="none" stroke="#6a7278" stroke-width="1.100"/><g transform="translate(2,4.5) scale(.86)"><path d="M9.500 10.500l2.600 3" stroke="#4a4a4a" stroke-width="1.300" stroke-linecap="round"/>
<path d="M5 6.500l2.500-2.500c2 .6 3.800 2.600 4 5l-2.500 2.500c-2.400-.6-3.800-2.600-4-5z" fill="#f0a818" stroke="#a87408" stroke-width=".7"/>
<path d="M4.300 4.600l1.800 1.800" stroke="#c88a10" stroke-width="2"/>
<ellipse cx="3.600" cy="3.800" rx="2.700" ry="2" transform="rotate(45 3.600 3.800)" fill="#f4c020" stroke="#a87408" stroke-width=".7"/>
<path d="M7 6l2.500 3.500" stroke="#ffe88a" stroke-width="1" opacity=".8"/></g></g>
<g transform="translate(291.5,66.5)" ><rect x=".5" y=".5" width="16" height="16" rx="1.800" fill="#0c0c0c"/>
<rect x="3.800" y="2.600" width="9.400" height="11.800" fill="#fff"/>
<path d="M4.500 4.300h8M4.500 6.500h8M4.500 8.700h8M4.500 10.900h8M5.500 13h6" stroke="#111" stroke-width="1.200"/>
<g fill="#f4f4f4"><rect x="1.3" y="1.6" width="1.400" height="1.400"/><rect x="14.3" y="1.6" width="1.400" height="1.400"/><rect x="1.3" y="4.9" width="1.400" height="1.400"/><rect x="14.3" y="4.9" width="1.400" height="1.400"/><rect x="1.3" y="8.2" width="1.400" height="1.400"/><rect x="14.3" y="8.2" width="1.400" height="1.400"/><rect x="1.3" y="11.499999999999998" width="1.400" height="1.400"/><rect x="14.3" y="11.499999999999998" width="1.400" height="1.400"/><rect x="1.3" y="14.799999999999999" width="1.400" height="1.400"/><rect x="14.3" y="14.799999999999999" width="1.400" height="1.400"/><rect x="4.5" y="0.9" width="1.300" height="1"/><rect x="4.5" y="15.1" width="1.300" height="1"/><rect x="7.8" y="0.9" width="1.300" height="1"/><rect x="7.8" y="15.1" width="1.300" height="1"/><rect x="11.1" y="0.9" width="1.300" height="1"/><rect x="11.1" y="15.1" width="1.300" height="1"/></g></g>
<g transform="translate(376,64.5)" ><ellipse cx="6" cy="14.500" rx="6" ry="4.200" fill="#3a9a2a" transform="rotate(-22 6 14.500)"/>
<path d="M2 14l6-3M3.500 16.500l6-3" stroke="#d8f0c0" stroke-width="1.300"/>
<ellipse cx="16" cy="14.500" rx="5.500" ry="4.200" fill="#2a62c0"/>
<path d="M13.500 13.500c1.500-1.200 4-1.200 5.500 0M14 16c1.500 1 3.500 1 5 0" stroke="#d0e0ff" stroke-width="1.300" fill="none"/>
<path d="M8.500 1.500l7 1.500 1.500 7.500-7.500 1z" fill="#e8c818" stroke="#a88a08" stroke-width=".6"/>
<path d="M11 3.500v6M13.500 6.500c1.500 0 1.800 2.500 0 2.800" stroke="#8a6a08" stroke-width="1.200" fill="none"/></g>
<g transform="translate(437,63.5)" ><path d="M1.500 4.500L15.500 1 16.500 17.500 4.500 22z" fill="#b07a68" stroke="#7c4636" stroke-width=".7"/>
<path d="M3.800 6.300L13.800 3.500 14.600 16 5.800 19.500z" fill="url(#gDoc)" stroke="#6a5a4a" stroke-width=".5"/>
<path d="M1.300 5.500l3 17" stroke="#e6d21e" stroke-width="1.500"/><path d="M4.500 22.300L16.800 17.800" stroke="#d8c418" stroke-width="1.300"/>
<path d="M1.500 4.500L15.500 1" stroke="#c89888" stroke-width=".8"/></g>
<g transform="translate(503,64.5)" ><rect x="1" y="1.800" width="19.5" height="19.5" rx="3" fill="#b9916a" opacity=".55" filter="url(#fS)"/><rect x=".3" y=".3" width="19.4" height="19.4" rx="1.800" fill="url(#gOr)" stroke="#d87a18" stroke-width=".6"/><rect x=".6" y="15.5" width="18.8" height="4" rx="1.500" fill="#b85a00" opacity=".45"/><path d="M2 1.600h14" stroke="#fbd0a0" stroke-width="1" opacity=".55"/><rect x="3" y="3" width="9" height="10.500" fill="#c89a68" stroke="#fff" stroke-width="1.100"/><rect x="8" y="7" width="9" height="10.500" fill="#d2a878" stroke="#fff" stroke-width="1.100"/></g>
<g transform="translate(584,64.5)" ><rect x="1" y="1.800" width="19.5" height="19.5" rx="3" fill="#b9916a" opacity=".55" filter="url(#fS)"/><rect x=".3" y=".3" width="19.4" height="19.4" rx="1.800" fill="url(#gOr)" stroke="#d87a18" stroke-width=".6"/><rect x=".6" y="15.5" width="18.8" height="4" rx="1.500" fill="#b85a00" opacity=".45"/><path d="M2 1.600h14" stroke="#fbd0a0" stroke-width="1" opacity=".55"/><path d="M4 4.500h5v2.500h-1v2.500h3.500v2.500h-10v-2.500h3.500v-2.500h-1z" fill="#fff"/>
<path d="M17.500 4.500l-4.500 6-1 0-1.200 1.800 1.500 1.200 1.200-1.800 0-1z" fill="#fff"/><path d="M10.800 12.500c-1.500 1-3 3-3.800 5.500 2.500-.5 4.200-2 5-4z" fill="#fff"/></g>
<g transform="translate(7,98)" ><path d="M.5 .5H11Q16.5 1 16.5 6V21.0H.5z" fill="url(#gDoc)" stroke="#8a949c" stroke-width="1"/><path d="M11 .6Q16.2 1 16.4 6" fill="none" stroke="#6a7278" stroke-width="1.100"/></g>
<g transform="translate(38.5,98)" ><path d="M1 3.500L7.500 1.500 10 4 16 2V14L2.500 20.500z" fill="#d89c08" stroke="#7a560c" stroke-width=".8"/>
<path d="M2.500 20.500L6 8.500 20.500 5.500 16.500 15z" fill="url(#gGold)" stroke="#8a6408" stroke-width=".8"/>
<path d="M1.500 4L7.300 2.200 9.800 4.600 15.500 2.800" fill="none" stroke="#ffe680" stroke-width=".9"/>
<path d="M11.500 6.500c2.500-.5 4.500.5 5.500 2.500l2.500-1-1.500 6.500-6-2.500 2.200-1c-.8-1.200-2-1.800-3.700-1.500z" fill="url(#gBlueArr)" stroke="#2f7fc0" stroke-width=".8"/></g>
<g transform="translate(71.5,98)" ><path d="M1.500 .7H19a1.500 1.500 0 0 1 1.500 1.500V19.500a1.500 1.500 0 0 1-1.500 1.500H3L.5 18.500V1.700a1 1 0 0 1 1-1z" fill="url(#gGreen)" stroke="#1c6a1a" stroke-width=".8"/>
<rect x="3.500" y="1.200" width="14" height="8.800" fill="#dfe3ee" stroke="#8f98a8" stroke-width=".6"/>
<path d="M5 3.500h11M5 5.500h11M5 7.500h11" stroke="#4a66c0" stroke-width="1.100"/>
<rect x="5" y="13" width="11.500" height="8" fill="#1f6a1c"/>
<rect x="9.500" y="13.800" width="6.200" height="6.800" fill="#f2f2f2"/><path d="M9.500 20.600L15.700 13.800V20.600z" fill="#8f8f8f"/></g>
<g transform="translate(104,97)" ><path d="M3 2.700H20a1.500 1.500 0 0 1 1.500 1.500V21a1.500 1.500 0 0 1-1.500 1.500H4.500L2 20V3.700a1 1 0 0 1 1-1z" fill="url(#gGreen)" stroke="#1c6a1a" stroke-width=".8"/>
<rect x="8" y="3.200" width="11" height="8" fill="#dfe3ee" stroke="#8f98a8" stroke-width=".6"/>
<path d="M12 5.200h6M12 7.200h6M12 9.200h6" stroke="#4a66c0" stroke-width="1.100"/>
<rect x="6" y="15" width="11.500" height="7.500" fill="#1f6a1c"/>
<rect x="10.500" y="15.800" width="6.200" height="6.200" fill="#f2f2f2"/><path d="M10.500 22L16.700 15.800V22z" fill="#8f8f8f"/>
<path d="M1 4.500C2 1.500 5 .3 8 1.800l1.500-2 2.500 7-7 .2 1.600-2C5 4 3.200 4 1 4.500z" transform="rotate(18 6 5) translate(0 1.500)" fill="url(#gBlueArr)" stroke="#2f7fc0" stroke-width=".8"/></g>
<g transform="translate(137,98.5)" ><path d="M6 9.500L1.500 1.200C5 1.800 9 .8 13.500 0c1.200 2.500 2 5 2.500 7.500z" fill="url(#gDoc)" stroke="#9ab4c0" stroke-width=".6"/>
<path d="M.5 12.500L6 8.800 20.800 7.500 21 9.500 9.500 14.500z" fill="#ececec" stroke="#8a8a8a" stroke-width=".7"/>
<path d="M.5 12.500L9.500 14.800V21L.8 17.800z" fill="#fbfbfb" stroke="#8a8a8a" stroke-width=".8"/>
<path d="M9.500 14.800L21 9.500V15L9.500 21z" fill="url(#gPr)" stroke="#6a6a6a" stroke-width=".6"/>
<path d="M.8 15.500L9.500 18" stroke="#b0b0b0" stroke-width=".8"/>
<path d="M6.500 10.500L17 8.800" stroke="#4a4a4a" stroke-width="1.200"/></g>
<g transform="translate(170,98)" ><path d="M4.500 21.500L.8 7.500 5 10C7 5.500 10 1.500 14 .8c3.500-.4 5.800 3.800 5.800 10-1.200-3.600-2.800-5.600-4.600-5.800 1.200 1.200 1.600 2.600 1.200 4-1.200-1.400-2.800-1.600-4.200-.6-1.200 1-2 2.400-2.700 4l2.500 1z" fill="url(#gUndo)" stroke="#3c9cd2" stroke-width="1" stroke-linejoin="round"/>
<path d="M3 10.500l2.500 8" stroke="#58c0f0" stroke-width="1.600" opacity=".7"/></g>
<path d="M204.5 95V123" stroke="#c4c4c4" stroke-width="1"/><path d="M205.5 95V123" stroke="#fbfbfb" stroke-width="1"/>
<g transform="translate(217,99)" ><rect x="1" y="1.800" width="19.5" height="19.5" rx="3" fill="#b9916a" opacity=".55" filter="url(#fS)"/><rect x=".3" y=".3" width="19.4" height="19.4" rx="1.800" fill="url(#gOr)" stroke="#d87a18" stroke-width=".6"/><rect x=".6" y="15.5" width="18.8" height="4" rx="1.500" fill="#b85a00" opacity=".45"/><path d="M2 1.600h14" stroke="#fbd0a0" stroke-width="1" opacity=".55"/><rect x="3.500" y="5" width="2" height="10" fill="#fff"/><path d="M11.500 5v10L6 10z" fill="#fff"/><path d="M17 5v10L11.500 10z" fill="#fff"/></g>
<g transform="translate(250,99)" ><rect x="1" y="1.800" width="19.5" height="19.5" rx="3" fill="#b9916a" opacity=".55" filter="url(#fS)"/><rect x=".3" y=".3" width="19.4" height="19.4" rx="1.800" fill="url(#gOr)" stroke="#d87a18" stroke-width=".6"/><rect x=".6" y="15.5" width="18.8" height="4" rx="1.500" fill="#b85a00" opacity=".45"/><path d="M2 1.600h14" stroke="#fbd0a0" stroke-width="1" opacity=".55"/><path d="M12.500 4.500v11L6.500 10z" fill="#fff"/></g>
<g transform="translate(373,99)" ><rect x="1" y="1.800" width="19.5" height="19.5" rx="3" fill="#b9916a" opacity=".55" filter="url(#fS)"/><rect x=".3" y=".3" width="19.4" height="19.4" rx="1.800" fill="url(#gOr)" stroke="#d87a18" stroke-width=".6"/><rect x=".6" y="15.5" width="18.8" height="4" rx="1.500" fill="#b85a00" opacity=".45"/><path d="M2 1.600h14" stroke="#fbd0a0" stroke-width="1" opacity=".55"/><path d="M7.500 4.500v11L13.500 10z" fill="#fff"/></g>
<g transform="translate(406,99)" ><rect x="1" y="1.800" width="19.5" height="19.5" rx="3" fill="#b9916a" opacity=".55" filter="url(#fS)"/><rect x=".3" y=".3" width="19.4" height="19.4" rx="1.800" fill="url(#gOr)" stroke="#d87a18" stroke-width=".6"/><rect x=".6" y="15.5" width="18.8" height="4" rx="1.500" fill="#b85a00" opacity=".45"/><path d="M2 1.600h14" stroke="#fbd0a0" stroke-width="1" opacity=".55"/><rect x="14.500" y="5" width="2" height="10" fill="#fff"/><path d="M3.500 5v10L9 10z" fill="#fff"/><path d="M9 5v10L14.500 10z" fill="#fff"/></g>
<path d="M439.5 95V123" stroke="#c4c4c4" stroke-width="1"/><path d="M440.5 95V123" stroke="#fbfbfb" stroke-width="1"/>
<g transform="translate(452,99)" ><rect x="1" y="1.800" width="19.5" height="19.5" rx="3" fill="#b9916a" opacity=".55" filter="url(#fS)"/><rect x=".3" y=".3" width="19.4" height="19.4" rx="1.800" fill="url(#gOr)" stroke="#d87a18" stroke-width=".6"/><rect x=".6" y="15.5" width="18.8" height="4" rx="1.500" fill="#b85a00" opacity=".45"/><path d="M2 1.600h14" stroke="#fbd0a0" stroke-width="1" opacity=".55"/><path d="M5.500 9.500A5 5 0 1 1 10 15.500" fill="none" stroke="#fff" stroke-width="2.400"/><path d="M2.500 5.500l7 .5-3.500 5z" fill="#fff"/></g>
<g transform="translate(485,99)" ><rect x="1" y="1.800" width="19.5" height="19.5" rx="3" fill="#b9916a" opacity=".55" filter="url(#fS)"/><rect x=".3" y=".3" width="19.4" height="19.4" rx="1.800" fill="url(#gOr)" stroke="#d87a18" stroke-width=".6"/><rect x=".6" y="15.5" width="18.8" height="4" rx="1.500" fill="#b85a00" opacity=".45"/><path d="M2 1.600h14" stroke="#fbd0a0" stroke-width="1" opacity=".55"/><path d="M14.500 9.500A5 5 0 1 0 10 15.500" fill="none" stroke="#fff" stroke-width="2.400"/><path d="M17.500 5.500l-7 .5 3.500 5z" fill="#fff"/></g>
<path d="M518.5 95V123" stroke="#c4c4c4" stroke-width="1"/><path d="M519.5 95V123" stroke="#fbfbfb" stroke-width="1"/>
<g transform="translate(532,98)" ><path d="M.5 .5H11Q16.5 1 16.5 6V21.0H.5z" fill="url(#gDoc)" stroke="#8a949c" stroke-width="1"/><path d="M11 .6Q16.2 1 16.4 6" fill="none" stroke="#6a7278" stroke-width="1.100"/><text x="8.500" y="15.500" text-anchor="middle" font-family="Liberation Sans,sans-serif" font-size="9" font-weight="bold" fill="#1010f0">1:1</text></g>
<g transform="translate(565,98)" ><path d="M.5 .5H11Q16.5 1 16.5 6V21.0H.5z" fill="url(#gDoc)" stroke="#8a949c" stroke-width="1"/><path d="M11 .6Q16.2 1 16.4 6" fill="none" stroke="#6a7278" stroke-width="1.100"/><path d="M8.500 3v16M5 6.500L8.500 3 12 6.500M5 15.500L8.500 19 12 15.500" fill="none" stroke="#1414f0" stroke-width="1.300"/></g>
<g transform="translate(598,98)" ><path d="M.5 .5H11Q16.5 1 16.5 6V21.0H.5z" fill="url(#gDoc)" stroke="#8a949c" stroke-width="1"/><path d="M11 .6Q16.2 1 16.4 6" fill="none" stroke="#6a7278" stroke-width="1.100"/><path d="M1.500 10.500h14M5 7L1.500 10.500 5 14M12 7L15.500 10.500 12 14" fill="none" stroke="#1414f0" stroke-width="1.300"/><path d="M7.500 10.500h2" stroke="#cfeefb" stroke-width="1.600"/></g>
<path d="M677 106l3-3 3 3z" fill="#4a5aa8"/><path d="M677 113l3 3 3-3z" fill="#4a5aa8"/>
<g transform="translate(725,98.5)" ><path d="M.7 .8V17.200L4.600 13.600 7.600 20.600 10.300 19.400 7.300 12.600H12.300z" fill="#e9e9e9" stroke="#a2a2a2" stroke-width="1.100" stroke-linejoin="round"/><path d="M3.200 7.500L9.800 13.800 6 13.200 8.800 19.500" fill="none" stroke="#8f8f8f" stroke-width="1.500" opacity=".75"/></g>
<g transform="translate(8.5,131)" ><path d="M1 3.500L7.500 1.500 10 4 16 2V14L2.500 20.500z" fill="#d89c08" stroke="#7a560c" stroke-width=".8"/>
<path d="M2.500 20.500L6 8.500 20.500 5.500 16.500 15z" fill="url(#gGold)" stroke="#8a6408" stroke-width=".8"/>
<path d="M1.500 4L7.300 2.200 9.800 4.600 15.500 2.800" fill="none" stroke="#ffe680" stroke-width=".9"/>
<path d="M11.500 6.500c2.500-.5 4.500.5 5.500 2.500l2.500-1-1.500 6.500-6-2.500 2.200-1c-.8-1.200-2-1.800-3.700-1.500z" fill="url(#gBlueArr)" stroke="#2f7fc0" stroke-width=".8"/></g>
<g transform="translate(134,129)" ><path d="M14.500 2l6.500 2.500-2.500 7-7-2.500z" fill="#a8daf4" stroke="#6aa8d0" stroke-width=".7"/>
<path d="M1.500 15.500c.5-4 3.500-8 8-10.500 2.500-1 4.500 0 5 2-.5 4-3.500 7.500-8 10-2.500 1-4.500.5-5-1.500z" fill="#e8c070" stroke="#9a7428" stroke-width=".8"/>
<path d="M2.500 19.500L14 2.500" stroke="#2f5a98" stroke-width="1.800"/><path d="M2.500 19.500l1.500-4" stroke="#222" stroke-width="1.500"/></g>
<g transform="translate(236.5,131.5)" ><path d="M.5 .5H7.5Q11.5 1 11.5 4.5V14.5H.5z" fill="url(#gDoc)" stroke="#8a949c" stroke-width="1"/><path d="M7.5 .6Q11.2 1 11.4 4.5" fill="none" stroke="#6a7278" stroke-width="1.100"/></g>
<g transform="translate(229,137)" ><path d="M.5 .5H7.5Q11.5 1 11.5 4.5V15.0H.5z" fill="url(#gDoc)" stroke="#8a949c" stroke-width="1"/><path d="M7.5 .6Q11.2 1 11.4 4.5" fill="none" stroke="#6a7278" stroke-width="1.100"/></g>
<g transform="translate(302,131)" ><path d="M.5 .5H11Q16.5 1 16.5 6V21.0H.5z" fill="url(#gDoc)" stroke="#8a949c" stroke-width="1"/><path d="M11 .6Q16.2 1 16.4 6" fill="none" stroke="#6a7278" stroke-width="1.100"/><g transform="translate(2,4) scale(.86)"><path d="M9.500 10.500l2.600 3" stroke="#4a4a4a" stroke-width="1.300" stroke-linecap="round"/>
<path d="M5 6.500l2.500-2.500c2 .6 3.800 2.600 4 5l-2.500 2.500c-2.400-.6-3.800-2.600-4-5z" fill="#f0a818" stroke="#a87408" stroke-width=".7"/>
<path d="M4.300 4.600l1.800 1.800" stroke="#c88a10" stroke-width="2"/>
<ellipse cx="3.600" cy="3.800" rx="2.700" ry="2" transform="rotate(45 3.600 3.800)" fill="#f4c020" stroke="#a87408" stroke-width=".7"/>
<path d="M7 6l2.500 3.500" stroke="#ffe88a" stroke-width="1" opacity=".8"/></g></g>
<g transform="translate(400,131)" ><circle cx="11" cy="11" r="10.600" fill="#7f858c"/><circle cx="11" cy="11" r="9.900" fill="#b8bec6"/><circle cx="11" cy="11.300" r="8.800" fill="url(#gBall)"/>
<path d="M5.800 7.400C6.200 4.300 8.400 2.800 11.300 2.800c3.200 0 5.300 1.700 5.300 4.200 0 2.100-1.300 3.100-2.700 4-1.100.7-1.500 1.200-1.500 2.400H9.500c0-2.100.8-3.100 2.200-4 1.100-.7 1.800-1.200 1.800-2.200s-.9-1.700-2.200-1.700c-1.400 0-2.300.8-2.500 2.200z" fill="#fff" stroke="#858b93" stroke-width=".8"/>
<circle cx="10.800" cy="16.800" r="2" fill="#c4c4c4" stroke="#858b93" stroke-width=".8"/></g>
<g transform="translate(510,131)" ><path d="M1.500 13.500L12 8.500l1 2L6.500 14l.5 2-2 .8.600 2.200-2.500 1.500z" fill="#e8b818" stroke="#9a7408" stroke-width=".8" stroke-linejoin="round"/>
<ellipse cx="16.500" cy="6" rx="4.600" ry="5.600" fill="#e8b818" stroke="#9a7408" stroke-width=".8"/><ellipse cx="17" cy="5.200" rx="1.800" ry="2.600" fill="#ededed" stroke="#9a7408" stroke-width=".6"/></g>
<g transform="translate(599.5,130)" ><path d="M3 2.700H20a1.500 1.500 0 0 1 1.500 1.500V21a1.500 1.500 0 0 1-1.500 1.500H4.500L2 20V3.700a1 1 0 0 1 1-1z" fill="url(#gGreen)" stroke="#1c6a1a" stroke-width=".8"/>
<rect x="8" y="3.200" width="11" height="8" fill="#dfe3ee" stroke="#8f98a8" stroke-width=".6"/>
<path d="M12 5.200h6M12 7.200h6M12 9.200h6" stroke="#4a66c0" stroke-width="1.100"/>
<rect x="6" y="15" width="11.500" height="7.500" fill="#1f6a1c"/>
<rect x="10.500" y="15.800" width="6.200" height="6.200" fill="#f2f2f2"/><path d="M10.500 22L16.700 15.800V22z" fill="#8f8f8f"/>
<path d="M1 4.500C2 1.500 5 .3 8 1.800l1.500-2 2.500 7-7 .2 1.600-2C5 4 3.200 4 1 4.500z" transform="rotate(18 6 5) translate(0 1.500)" fill="url(#gBlueArr)" stroke="#2f7fc0" stroke-width=".8"/></g>
<g transform="translate(9,163)" ><defs><linearGradient id="gBr" x1="0" y1="1" x2="1" y2="0"><stop offset="0" stop-color="#f8e020"/><stop offset=".45" stop-color="#f09018"/><stop offset=".75" stop-color="#d83818"/><stop offset="1" stop-color="#e8c8a0"/></linearGradient></defs>
<path d="M7.500 13.500C10 9 14.500 4 19.800.8 18.500 6 14.500 11.500 10 15.500z" fill="url(#gBr)" stroke="#b8a890" stroke-width=".5"/>
<path d="M6 14.500l2-2.200 2.600 2.600-2.100 2z" fill="#e8e8e8" stroke="#8a8a8a" stroke-width=".6"/>
<path d="M1 21.500c-.2-2.500.8-4.800 2.500-6 1.200-.8 2.800-.8 3.800.2 1 1 1 2.500.2 3.700-1.200 1.700-3.700 2.400-6.500 2.100z" fill="#c8900c" stroke="#8a6208" stroke-width=".6"/></g>
<ellipse cx="19.500" cy="203.500" rx="10.200" ry="10.200" fill="none" stroke="#000" stroke-width="2.300"/>
<ellipse cx="19.500" cy="233" rx="10.200" ry="6.600" fill="none" stroke="#000" stroke-width="2.300"/>
<rect x="9.500" y="254.500" width="19.500" height="19" fill="none" stroke="#000" stroke-width="2.200"/>
<rect x="9.500" y="289.500" width="19.500" height="9.500" fill="none" stroke="#000" stroke-width="2.200"/>
<rect x="9" y="313.500" width="20" height="20.500" rx="1.500" fill="none" stroke="#000" stroke-width="2.200"/><path d="M15.700 313.500v20.500M22.300 313.500v20.500M9 320.300h20M9 327.100h20" fill="none" stroke="#000" stroke-width="2"/>
<path d="M8.800 355L15 347.200 26.500 348.200 24.500 360.800 17.500 361.600" fill="none" stroke="#000" stroke-width="2.200" stroke-linejoin="miter"/>
<path d="M12.300 374.800L20.300 373.200 27.500 379.600 22.300 392.400 9 388.800z" fill="none" stroke="#000" stroke-width="2.200"/>
<path d="M9 413.500c1.500-3.500 4.500-4 7-1.500l5 5.500c2.500 2.600 5.500 2.400 6.500-1.500" fill="none" stroke="#000" stroke-width="2.300" stroke-linecap="round"/>
<path d="M31 432L23.500 455.500 19.500 446 11.500 453.500 9.500 451.500 17 443.500 7.500 440z" fill="#000"/>
<path d="M8.500 473.500H30" fill="none" stroke="#000" stroke-width="2.400"/>
<path d="M17.500 493.500V513.500" fill="none" stroke="#000" stroke-width="2.400"/>
<path d="M9.800 542L27.300 525" fill="none" stroke="#000" stroke-width="2.400"/>
<path d="M8.800 570.800L26 553.800M11.500 574.200L29.500 557" fill="none" stroke="#000" stroke-width="2.200"/>
<path d="M6 582.500H33" stroke="#a8a8a8" stroke-width="1"/>
<rect x="9.700" y="593.700" width="19.200" height="18" fill="none" stroke="#000" stroke-width="2.400" stroke-dasharray="3.200 2.100"/>
<g transform="translate(8,622)" ><defs><linearGradient id="gBk" x1="0" y1="0" x2="1" y2=".3"><stop offset="0" stop-color="#ffe428"/><stop offset=".35" stop-color="#fbb010"/><stop offset=".7" stop-color="#f46a0c"/><stop offset="1" stop-color="#ee4a0c"/></linearGradient></defs>
<path d="M4.500 8.500L16.500 2l5 11.500c-2 3-6.500 5.500-10.500 6z" fill="url(#gBk)" stroke="#c86a10" stroke-width=".6"/>
<path d="M10 9l4.500-2 3 7-4 2z" fill="#fff" opacity=".55"/>
<ellipse cx="10.500" cy="5.200" rx="6.500" ry="2.400" transform="rotate(-28 10.500 5.200)" fill="#f4fafc" stroke="#6ab8e0" stroke-width="1"/><path d="M4.800 8.300c1-1.500 2.500-2.800 4-3.600" stroke="#40b8f0" stroke-width="1.600" fill="none"/>
<path d="M4.500 8.500c-2 1-3 3-3 5.500" fill="none" stroke="#f0b010" stroke-width="1.500"/>
<ellipse cx="1.900" cy="15.800" rx="1.500" ry="2" fill="#f0c000" stroke="#a87808" stroke-width=".5"/></g>
<rect x="8.300" y="652" width="21.200" height="20.800" fill="none" stroke="#3a5252" stroke-width="2.200" stroke-dasharray="3.200 2.100"/>
<g transform="translate(8.5,652.5)" ><defs><linearGradient id="gBk" x1="0" y1="0" x2="1" y2=".3"><stop offset="0" stop-color="#ffe428"/><stop offset=".35" stop-color="#fbb010"/><stop offset=".7" stop-color="#f46a0c"/><stop offset="1" stop-color="#ee4a0c"/></linearGradient></defs>
<path d="M4.500 8.500L16.500 2l5 11.500c-2 3-6.500 5.500-10.500 6z" fill="url(#gBk)" stroke="#c86a10" stroke-width=".6"/>
<path d="M10 9l4.500-2 3 7-4 2z" fill="#fff" opacity=".55"/>
<ellipse cx="10.500" cy="5.200" rx="6.500" ry="2.400" transform="rotate(-28 10.500 5.200)" fill="#f4fafc" stroke="#6ab8e0" stroke-width="1"/><path d="M4.800 8.300c1-1.500 2.500-2.800 4-3.600" stroke="#40b8f0" stroke-width="1.600" fill="none"/>
<path d="M4.500 8.500c-2 1-3 3-3 5.500" fill="none" stroke="#f0b010" stroke-width="1.500"/>
<ellipse cx="1.900" cy="15.800" rx="1.500" ry="2" fill="#f0c000" stroke="#a87808" stroke-width=".5"/></g>
<rect x="10.700" y="684" width="13.300" height="12.300" fill="none" stroke="#2a4af0" stroke-width="1.400"/>
<rect x="18" y="691" width="10.500" height="9" fill="#fff" stroke="#000" stroke-width="1.300"/>
<rect x="16.4" y="689.4" width="3.200" height="3.200" rx=".8" fill="#fff" stroke="#000" stroke-width="1.100"/>
<rect x="26.9" y="689.4" width="3.200" height="3.200" rx=".8" fill="#fff" stroke="#000" stroke-width="1.100"/>
<rect x="16.4" y="698.4" width="3.200" height="3.200" rx=".8" fill="#fff" stroke="#000" stroke-width="1.100"/>
<rect x="26.9" y="698.4" width="3.200" height="3.200" rx=".8" fill="#fff" stroke="#000" stroke-width="1.100"/>
<rect x="9.500" y="719" width="18.500" height="5.200" rx="2" fill="#fff" stroke="#000" stroke-width="2"/>
<path d="M8.800 760.500L17.700 744.500 27.800 760.500" fill="none" stroke="#000" stroke-width="4.200" stroke-linejoin="miter" stroke-miterlimit="6"/><path d="M8.800 761.500L17.700 744.500 27.800 761.500" fill="none" stroke="#fff" stroke-width="1.500" stroke-linejoin="miter" stroke-miterlimit="6"/>
<path d="M7 782.500H31" fill="none" stroke="#000" stroke-width="2.200"/>
<path d="M1202.500 188.500V201.500H1214" fill="none" stroke="#000" stroke-width="1.200"/><path d="M1213.500 198.500l3.500 3-3.500 3z" fill="#000"/><path d="M1200.500 191l2-3 2 3z" fill="#000"/>
<path d="M1255.500 290.500L1272 274.500" stroke="#555" stroke-width="1"/><path d="M1257.500 280l2.800-3.200 2.800 3.200zM1260.300 279v4" fill="#000" stroke="#000" stroke-width="1.300"/><path d="M1265 286l2.800 3.200 2.800-3.200zM1267.800 283v4" fill="#000" stroke="#000" stroke-width="1.300"/>
<circle cx="1212.2" cy="306.3" r="0.65" fill="#000"/>
<circle cx="1234.2" cy="306.3" r="1.05" fill="#000"/>
<circle cx="1256.2" cy="306.3" r="1.5" fill="#000"/>
<circle cx="1212.2" cy="327.3" r="2.1" fill="#000"/>
<circle cx="1234.2" cy="327.3" r="2.8" fill="#000"/>
<circle cx="1256.2" cy="327.3" r="3.3" fill="#000"/>
<g transform="translate(1201,384)" ><rect x="0" y="0" width="15.500" height="15.500" rx="1.500" fill="#8a8e96"/><rect x=".5" y=".5" width="14.500" height="7" rx="1.500" fill="#b8bcc4" opacity=".8"/>
<path d="M3 2.500v11M6.300 2.500v11M9.600 2.500v11M12.900 2.500v11" stroke="#2a2e36" stroke-width="1.100"/>
<path d="M1.800 5h2.400M5.100 8.500h2.400M8.400 4h2.400M11.700 6.500h2.400" stroke="#f4f4f4" stroke-width="1.800"/></g>
<rect x="346.400" y="264.300" width="318.600" height="416.600" fill="none" stroke="#ff8080" stroke-width="10.800"/>
<rect x="340.500" y="258.400" width="330.200" height="428.200" fill="none" stroke="#000" stroke-width="1.100"/>
<rect x="340" y="258.800" width="330" height="427.400" fill="none" stroke="#000" stroke-width="1" shape-rendering="crispEdges" transform="rotate(17.990 505 472.500)"/>
<polygon points="355.5,432.3 654,305.5 655.7,512.4 356.5,638.5" fill="#ffff00" fill-opacity=".5"/>
<g transform="matrix(0.60750 -0.53125 0.21433 0.65333 351 480)"><rect x="0" y="0" width="400" height="300" fill="#ffff00" fill-opacity=".5"/><rect x="0" y="0" width="400" height="10.500" fill="#6a6a00" fill-opacity=".32"/><rect x="0" y="0" width="400" height="1.500" fill="#505050" fill-opacity=".5"/><rect x="0" y="13" width="400" height="58" fill="#a0a040" fill-opacity=".05"/><rect x="0" y="0" width="400" height="300" fill="#585800" fill-opacity=".02"/><rect x="0" y="270" width="400" height="30" fill="#707020" fill-opacity=".06"/><rect x="0" y="296" width="400" height="4" fill="#606010" fill-opacity=".16"/><path d="M0 30H400M0 50H400M0 71H400M150 71V300" stroke="#b8b020" stroke-opacity=".22" stroke-width="1.500" fill="none"/><rect x="14" y="35" width="11" height="11" rx="2" fill="#f0a000" fill-opacity=".28"/><rect x="40" y="35" width="11" height="11" rx="2" fill="#f0a000" fill-opacity=".28"/><rect x="66" y="35" width="11" height="11" rx="2" fill="#f0a000" fill-opacity=".28"/><rect x="92" y="35" width="11" height="11" rx="2" fill="#f0a000" fill-opacity=".28"/><rect x="150" y="35" width="11" height="11" rx="2" fill="#f0a000" fill-opacity=".28"/><rect x="176" y="35" width="11" height="11" rx="2" fill="#f0a000" fill-opacity=".28"/><rect x="230" y="35" width="11" height="11" rx="2" fill="#f0a000" fill-opacity=".28"/><rect x="256" y="35" width="11" height="11" rx="2" fill="#f0a000" fill-opacity=".28"/><rect x="300" y="35" width="11" height="11" rx="2" fill="#f0a000" fill-opacity=".28"/><rect x="14" y="55" width="11" height="11" rx="2" fill="#f0a000" fill-opacity=".25"/><rect x="40" y="55" width="11" height="11" rx="2" fill="#f0a000" fill-opacity=".25"/><rect x="100" y="55" width="11" height="11" rx="2" fill="#60c040" fill-opacity=".25"/><rect x="126" y="55" width="11" height="11" rx="2" fill="#f0a000" fill-opacity=".25"/><rect x="190" y="55" width="11" height="11" rx="2" fill="#f0a000" fill-opacity=".25"/><rect x="250" y="55" width="11" height="11" rx="2" fill="#60c040" fill-opacity=".25"/><rect x="276" y="55" width="11" height="11" rx="2" fill="#f0a000" fill-opacity=".25"/><circle cx="300" cy="22" r="6" fill="#30b0a0" fill-opacity=".4"/><circle cx="340" cy="22" r="6" fill="#30b0a0" fill-opacity=".4"/><path d="M28 92h34M156 92h38M246 92h42M312 92h50" stroke="#a09800" stroke-opacity=".2" stroke-width="3.400" fill="none"/><rect x="20" y="89.5" width="5" height="5" fill="#f0a000" fill-opacity=".3"/><path d="M33 100h41M156 100h49M246 100h42M312 100h50" stroke="#a09800" stroke-opacity=".2" stroke-width="3.400" fill="none"/><rect x="25" y="97.5" width="5" height="5" fill="#f0a000" fill-opacity=".3"/><path d="M38 108h48M156 108h60M246 108h42M312 108h50" stroke="#a09800" stroke-opacity=".2" stroke-width="3.400" fill="none"/><rect x="30" y="105.5" width="5" height="5" fill="#f0a000" fill-opacity=".3"/><path d="M43 116h55M156 116h41M246 116h42M312 116h50" stroke="#a09800" stroke-opacity=".2" stroke-width="3.400" fill="none"/><rect x="35" y="113.5" width="5" height="5" fill="#f0a000" fill-opacity=".3"/><path d="M30 124h34M156 124h52M246 124h42M312 124h50" stroke="#a09800" stroke-opacity=".2" stroke-width="3.400" fill="none"/><rect x="22" y="121.5" width="5" height="5" fill="#f0a000" fill-opacity=".3"/><path d="M35 132h41M156 132h63M246 132h42M312 132h50" stroke="#a09800" stroke-opacity=".2" stroke-width="3.400" fill="none"/><rect x="27" y="129.5" width="5" height="5" fill="#f0a000" fill-opacity=".3"/><path d="M40 140h48M156 140h44M246 140h42M312 140h50" stroke="#a09800" stroke-opacity=".2" stroke-width="3.400" fill="none"/><rect x="32" y="137.5" width="5" height="5" fill="#f0a000" fill-opacity=".3"/><path d="M45 148h55M156 148h55M246 148h42M312 148h50" stroke="#a09800" stroke-opacity=".2" stroke-width="3.400" fill="none"/><rect x="37" y="145.5" width="5" height="5" fill="#f0a000" fill-opacity=".3"/><path d="M32 156h34M156 156h66M246 156h42M312 156h50" stroke="#a09800" stroke-opacity=".2" stroke-width="3.400" fill="none"/><rect x="24" y="153.5" width="5" height="5" fill="#f0a000" fill-opacity=".3"/><path d="M37 164h41M156 164h47M246 164h42M312 164h50" stroke="#a09800" stroke-opacity=".2" stroke-width="3.400" fill="none"/><rect x="29" y="161.5" width="5" height="5" fill="#f0a000" fill-opacity=".3"/><path d="M42 172h48M156 172h58M246 172h42M312 172h50" stroke="#a09800" stroke-opacity=".2" stroke-width="3.400" fill="none"/><rect x="34" y="169.5" width="5" height="5" fill="#f0a000" fill-opacity=".3"/><path d="M29 180h55M156 180h39M246 180h42M312 180h50" stroke="#a09800" stroke-opacity=".2" stroke-width="3.400" fill="none"/><rect x="21" y="177.5" width="5" height="5" fill="#f0a000" fill-opacity=".3"/><path d="M34 188h34M156 188h50M246 188h42M312 188h50" stroke="#a09800" stroke-opacity=".2" stroke-width="3.400" fill="none"/><rect x="26" y="185.5" width="5" height="5" fill="#f0a000" fill-opacity=".3"/><path d="M39 196h41M156 196h61M246 196h42M312 196h50" stroke="#a09800" stroke-opacity=".2" stroke-width="3.400" fill="none"/><rect x="31" y="193.5" width="5" height="5" fill="#f0a000" fill-opacity=".3"/><path d="M44 204h48M156 204h42M246 204h42M312 204h50" stroke="#a09800" stroke-opacity=".2" stroke-width="3.400" fill="none"/><rect x="36" y="201.5" width="5" height="5" fill="#f0a000" fill-opacity=".3"/><path d="M31 212h55M156 212h53M246 212h42M312 212h50" stroke="#a09800" stroke-opacity=".2" stroke-width="3.400" fill="none"/><rect x="23" y="209.5" width="5" height="5" fill="#f0a000" fill-opacity=".3"/><path d="M36 220h34M156 220h64M246 220h42M312 220h50" stroke="#a09800" stroke-opacity=".2" stroke-width="3.400" fill="none"/><rect x="28" y="217.5" width="5" height="5" fill="#f0a000" fill-opacity=".3"/><path d="M41 228h41M156 228h45M246 228h42M312 228h50" stroke="#a09800" stroke-opacity=".2" stroke-width="3.400" fill="none"/><rect x="33" y="225.5" width="5" height="5" fill="#f0a000" fill-opacity=".3"/><path d="M28 236h48M156 236h56M246 236h42M312 236h50" stroke="#a09800" stroke-opacity=".2" stroke-width="3.400" fill="none"/><rect x="20" y="233.5" width="5" height="5" fill="#f0a000" fill-opacity=".3"/><path d="M33 244h55M156 244h67M246 244h42M312 244h50" stroke="#a09800" stroke-opacity=".2" stroke-width="3.400" fill="none"/><rect x="25" y="241.5" width="5" height="5" fill="#f0a000" fill-opacity=".3"/><path d="M38 252h34M156 252h48M246 252h42M312 252h50" stroke="#a09800" stroke-opacity=".2" stroke-width="3.400" fill="none"/><rect x="30" y="249.5" width="5" height="5" fill="#f0a000" fill-opacity=".3"/><path d="M43 260h41M156 260h59M246 260h42M312 260h50" stroke="#a09800" stroke-opacity=".2" stroke-width="3.400" fill="none"/><rect x="35" y="257.5" width="5" height="5" fill="#f0a000" fill-opacity=".3"/><path d="M30 268h48M156 268h40M246 268h42M312 268h50" stroke="#a09800" stroke-opacity=".2" stroke-width="3.400" fill="none"/><rect x="22" y="265.5" width="5" height="5" fill="#f0a000" fill-opacity=".3"/><path d="M35 276h55M156 276h51M246 276h42M312 276h50" stroke="#a09800" stroke-opacity=".2" stroke-width="3.400" fill="none"/><rect x="27" y="273.5" width="5" height="5" fill="#f0a000" fill-opacity=".3"/><path d="M40 284h34M156 284h62M246 284h42M312 284h50" stroke="#a09800" stroke-opacity=".2" stroke-width="3.400" fill="none"/><rect x="32" y="281.5" width="5" height="5" fill="#f0a000" fill-opacity=".3"/><path d="M0 82H400" stroke="#b8b020" stroke-opacity=".25" stroke-width="2" fill="none"/></g>
<clipPath id="clipA"><polygon points="355.5,432.3 654,305.5 655.7,512.4 356.5,638.5"/></clipPath><polygon points="351,480 594,267.5 660,464 415.3,676" fill="#ffff34" fill-opacity=".4" clip-path="url(#clipA)"/>
<polygon points="351,480 594,267.5 660,464 415.3,676" fill="none" stroke="#181800" stroke-width="1" stroke-dasharray="3 1.500"/>
<polygon points="355.5,432.3 654,305.5 655.7,512.4 356.5,638.5" fill="none" stroke="#101000" stroke-width="1" stroke-dasharray="3 1.500 1 1.500"/>
<g transform="translate(505.2,262.6)"><path d="M-8.200 0L-3 -4.500V4.500zM8.200 0L3 -4.500V4.500z" fill="#000"/><path d="M-3.500 0H3.500" stroke="#000" stroke-width="1.200"/><path d="M-3.300 -4.500V4.500M3.300 -4.500V4.500" stroke="#000" stroke-width="1.300"/></g>
<g transform="translate(505.2,680.7)"><path d="M-8.200 0L-3 -4.500V4.500zM8.200 0L3 -4.500V4.500z" fill="#000"/><path d="M-3.500 0H3.500" stroke="#000" stroke-width="1.200"/><path d="M-3.300 -4.500V4.500M3.300 -4.500V4.500" stroke="#000" stroke-width="1.300"/></g>
<g transform="translate(345,472)"><path d="M0 -8.200L-4.600 -3.200H4.600zM0 8.200L-4.600 3.200H4.600z" fill="#000"/><path d="M0 -3.500V3.500" stroke="#000" stroke-width="1.200"/></g>
<g transform="translate(664.5,472)"><path d="M0 -8.200L-4.600 -3.200H4.600zM0 8.200L-4.600 3.200H4.600z" fill="#000"/><path d="M0 -3.500V3.500" stroke="#000" stroke-width="1.200"/></g>
<g transform="translate(340.6,258.7) scale(1,1)"><path d="M3.500 -3.500H12.800L7.600 3.400zM-3.600 3.500V12.300L3.200 7.500z" fill="#000"/><path d="M-.6 5.500C-.3 2.500 2.500 -.3 6 -.8" fill="none" stroke="#000" stroke-width="1.400"/></g>
<g transform="translate(670.7,258.7) scale(-1,1)"><path d="M3.500 -3.500H12.800L7.600 3.400zM-3.600 3.500V12.300L3.200 7.500z" fill="#000"/><path d="M-.6 5.500C-.3 2.500 2.500 -.3 6 -.8" fill="none" stroke="#000" stroke-width="1.400"/></g>
<g transform="translate(340.6,686.3) scale(1,-1)"><path d="M3.500 -3.500H12.800L7.600 3.400zM-3.600 3.500V12.300L3.200 7.500z" fill="#000"/><path d="M-.6 5.500C-.3 2.500 2.500 -.3 6 -.8" fill="none" stroke="#000" stroke-width="1.400"/></g>
<g transform="translate(670.7,686.3) scale(-1,-1)"><path d="M3.500 -3.500H12.800L7.600 3.400zM-3.600 3.500V12.300L3.200 7.500z" fill="#000"/><path d="M-.6 5.500C-.3 2.500 2.500 -.3 6 -.8" fill="none" stroke="#000" stroke-width="1.400"/></g>
<circle cx="505.500" cy="472.500" r="5.100" fill="none" stroke="#000" stroke-width="1.100"/><circle cx="505.500" cy="472.500" r="2.600" fill="#000"/>
</svg>
<div class="t" style="left:20.60px;top:4px;font-size:12px;line-height:14px;color:#000;letter-spacing:-0.190px;">CAD-KAS PDF Editor 4.5 Objects</div>
<div class="t" style="left:196.90px;top:4px;font-size:12px;line-height:14px;color:#000;letter-spacing:0.400px;">-</div>
<div class="t" style="left:205.00px;top:4px;font-size:12px;line-height:14px;color:#000;letter-spacing:0.094px;">[Bedienungsanleitung.pdf*]</div>
<div class="t" style="left:0.90px;top:969px;font-size:12px;line-height:14px;color:#000;letter-spacing:-0.355px;">17.99°</div>
<div class="t" style="left:353.40px;top:969px;font-size:12px;line-height:14px;color:#000;letter-spacing:-0.136px;">(126.74 mm, 83.34 mm)</div>
<div class="t" style="left:31.90px;top:33px;font-size:12px;line-height:14px;color:#000;letter-spacing:-0.063px;">Datei</div>
<div class="t" style="left:95.90px;top:33px;font-size:12px;line-height:14px;color:#000;letter-spacing:-0.085px;">Bearbeiten</div>
<div class="t" style="left:188.90px;top:33px;font-size:12px;line-height:14px;color:#000;letter-spacing:0.192px;">Ansicht</div>
<div class="t" style="left:265.90px;top:33px;font-size:12px;line-height:14px;color:#000;letter-spacing:-0.232px;">Seite</div>
<div class="t" style="left:327.90px;top:33px;font-size:12px;line-height:14px;color:#000;letter-spacing:0.049px;">Auswahl</div>
<div class="t" style="left:409.90px;top:33px;font-size:12px;line-height:14px;color:#000;letter-spacing:-0.232px;">Farbe</div>
<div class="t" style="left:475.90px;top:33px;font-size:12px;line-height:14px;color:#000;letter-spacing:-0.072px;">Erweitert</div>
<div class="t" style="left:558.40px;top:33px;font-size:12px;line-height:14px;color:#000;letter-spacing:0.312px;">Optionen</div>
<div class="t" style="left:645.90px;top:33px;font-size:12px;line-height:14px;color:#000;letter-spacing:-0.286px;">Sprache</div>
<div class="t" style="left:724.90px;top:33px;font-size:12px;line-height:14px;color:#000;letter-spacing:0.437px;">Hilfe</div>
<div class="t" style="left:201.40px;top:69px;font-size:12px;line-height:14px;color:#000;letter-spacing:0.226px;">Anmerkungen</div>
<div class="t" style="left:314.90px;top:69px;font-size:12px;line-height:14px;color:#000;letter-spacing:0.002px;">Fomulare</div>
<div class="t" style="left:402.90px;top:69px;font-size:12px;line-height:14px;color:#000;letter-spacing:-0.079px;">Text</div>
<div class="t" style="left:460.90px;top:69px;font-size:12px;line-height:14px;color:#000;letter-spacing:0.002px;">Bilder</div>
<div class="t" style="left:527.90px;top:69px;font-size:12px;line-height:14px;color:#000;letter-spacing:-0.082px;">Grafiken</div>
<div class="t" style="left:608.90px;top:69px;font-size:12px;line-height:14px;color:#000;letter-spacing:-0.047px;">Stempel</div>
<div class="t" style="left:301.40px;top:102px;font-size:11px;line-height:13px;color:#000;">1 von 42</div>
<div class="t" style="left:638.90px;top:103px;font-size:11px;line-height:13px;color:#000;letter-spacing:-0.386px;">100</div>
<div class="t" style="left:694.90px;top:101px;font-size:11px;line-height:13px;color:#000;letter-spacing:1.919px;font-weight:bold;">%</div>
<div class="t" style="left:36.90px;top:137px;font-size:11px;line-height:13px;color:#000;letter-spacing:-0.069px;">PDF-Datei öffnen</div>
<div class="t" style="left:165.90px;top:135px;font-size:11px;line-height:13px;color:#000;letter-spacing:-0.052px;">Bearbeiten</div>
<div class="t" style="left:255.90px;top:137px;font-size:11px;line-height:13px;color:#000;letter-spacing:-0.001px;">Seiten</div>
<div class="t" style="left:327.90px;top:137px;font-size:11px;line-height:13px;color:#000;letter-spacing:-0.280px;">Lesezeichen</div>
<div class="t" style="left:427.90px;top:137px;font-size:11px;line-height:13px;color:#000;letter-spacing:0.149px;">Informationen</div>
<div class="t" style="left:537.90px;top:137px;font-size:11px;line-height:13px;color:#000;letter-spacing:-0.022px;">Sicherheit</div>
<div class="t" style="left:626.90px;top:137px;font-size:11px;line-height:13px;color:#000;letter-spacing:-0.205px;">PDF-Datei speichern</div>
<div class="t" style="left:1196.90px;top:208px;font-size:11px;line-height:13px;color:#000;letter-spacing:0.218px;">R --</div>
<div class="t" style="left:1196.90px;top:224px;font-size:11px;line-height:13px;color:#000;letter-spacing:0.062px;">G --</div>
<div class="t" style="left:1196.90px;top:240px;font-size:11px;line-height:13px;color:#000;letter-spacing:0.366px;">B --</div>
<div class="t" style="left:1200.40px;top:257px;font-size:11px;line-height:13px;color:#0a0a40;letter-spacing:-0.090px;">Linienstärke:</div>
<div class="t" style="left:1204.40px;top:276px;font-size:11px;line-height:13px;color:#000;letter-spacing:-0.055px;">1.00</div>
<div class="t" style="left:1219.90px;top:387px;font-size:11px;line-height:13px;color:#000;letter-spacing:0.081px;">Deckkraft</div>
</div></body></html>
